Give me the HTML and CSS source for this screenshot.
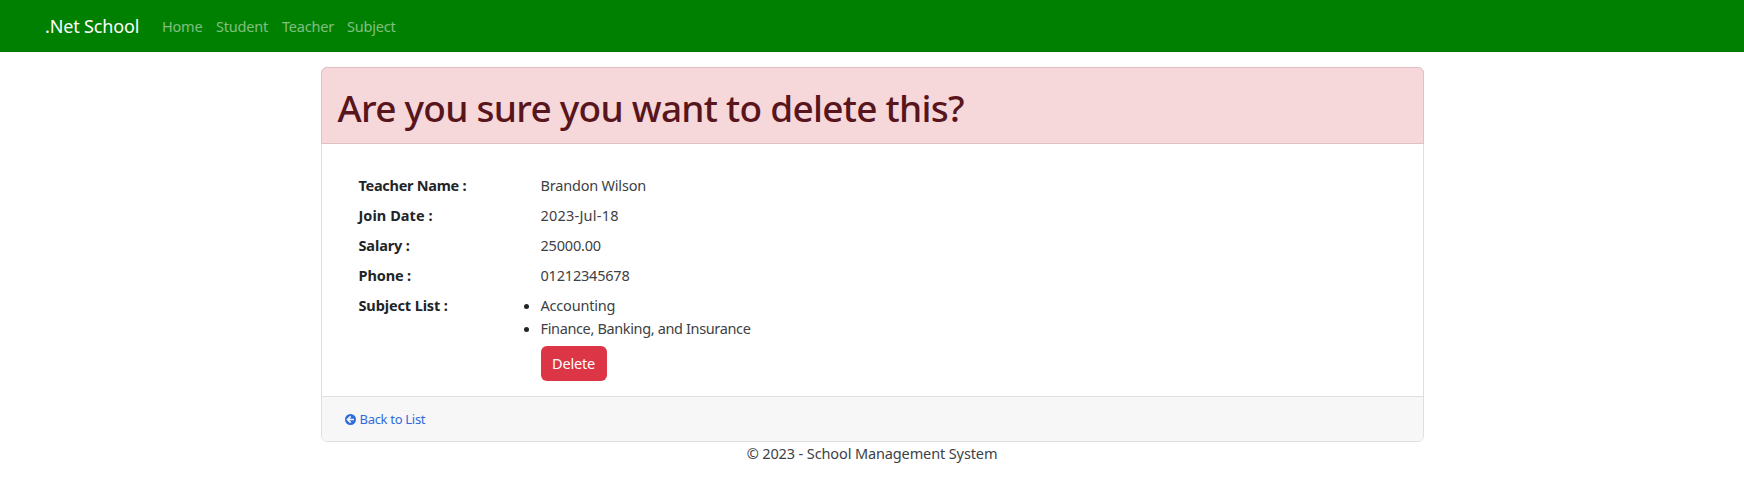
FILE: index.html
```html
<!DOCTYPE html>
<html lang="en">
<head>
  <meta charset="utf-8">
  <title>Delete - .Net School</title>
  <link rel="stylesheet" href="styles.css">
</head>
<body>
  <header class="navbar">
    <a class="brand" href="#">.Net School</a>
    <nav class="nav">
      <a class="nav-link home" href="#">Home</a>
      <a class="nav-link student" href="#">Student</a>
      <a class="nav-link teacher" href="#">Teacher</a>
      <a class="nav-link subject" href="#">Subject</a>
    </nav>
  </header>
  <main class="card">
    <div class="card-header"><h1 class="title">Are you sure you want to delete this?</h1></div>
    <div class="card-body">
      <dl class="details">
        <dt class="label-name">Teacher Name :</dt><dd>Brandon Wilson</dd>
        <dt class="label-date">Join Date :</dt><dd class="date">2023-Jul-18</dd>
        <dt>Salary :</dt><dd>25000.00</dd>
        <dt>Phone :</dt><dd>01212345678</dd>
        <dt>Subject List :</dt>
        <dd>
          <ul class="subjects">
            <li>Accounting</li>
            <li class="long">Finance, Banking, and Insurance</li>
          </ul>
        </dd>
      </dl>
      <button class="btn-delete" type="button">Delete</button>
    </div>
    <div class="card-footer">
      <a class="back" href="#">
        <svg class="back-icon" viewBox="0 0 24 24" aria-hidden="true">
          <circle cx="12" cy="12" r="12" fill="currentColor"/>
          <path d="M12.5 5 5.5 12l7 7M6.5 12H19.5" fill="none" stroke="#f7f7f7" stroke-width="3.6"/>
        </svg>
        <span>Back to List</span>
      </a>
    </div>
  </main>
  <footer class="footer"><span>© 2023 - School Management System</span></footer>
</body>
</html>
```
FILE: styles.css
```css
* { box-sizing: border-box; }

body {
  margin: 0;
  background: #fff;
  color: #212529;
  font: 14.5px/22.5px "Noto Sans", "Open Sans", sans-serif;
}

a { text-decoration: none; }

.navbar {
  display: flex;
  align-items: center;
  height: 52px;
  padding: 1px 45px 0;
  background: #008000;
  box-shadow: inset 0 -1px #007500;
}

.brand {
  width: 117px;
  color: #fff;
  font-size: 18px;
  letter-spacing: -0.15px;
}

.nav { display: flex; }

.nav-link { color: rgba(255, 255, 255, 0.5); white-space: nowrap; letter-spacing: -0.2px; }
.home { width: 54px; }
.student { width: 66px; }
.teacher { width: 65px; }

.card {
  width: 1103px;
  height: 375px;
  margin: 15px auto 0 320.5px;
  display: flex;
  flex-direction: column;
  border: 1px solid #dfdfdf;
  border-radius: 6px;
}

.card-header {
  height: 77px;
  margin: -1px -1px 0;
  padding: 0 16px;
  display: flex;
  align-items: center;
  background: #f6d7da;
  border: 1px solid #e2bfc3;
  border-radius: 6px 6px 0 0;
}

.title {
  margin: 3px 0 0;
  color: #58151c;
  font-size: 37px;
  line-height: 45px;
  font-weight: 500;
  letter-spacing: -0.74px;
  white-space: nowrap;
}

.card-body { flex: 1; padding: 30px 37px 0; }

.details {
  display: grid;
  grid-template-columns: 182px 1fr;
  row-gap: 7.5px;
  margin: 0;
}

.details dt { font-weight: 700; letter-spacing: -0.12px; }
.details dd { margin: 0; color: #3d4145; letter-spacing: -0.2px; }
.details .label-name { letter-spacing: -0.28px; }
.details .label-date { letter-spacing: 0.05px; }
.details .date { letter-spacing: 0.22px; }

.subjects { margin: 0; padding: 0; }
.subjects .long { letter-spacing: -0.36px; }
.subjects li::marker { color: #212529; }

.btn-delete {
  display: block;
  width: 66px;
  height: 35px;
  margin: 7px 0 0 182px;
  padding: 0;
  border: 0;
  border-radius: 6px;
  background: #dc3545;
  color: #fff;
  font: inherit;
  letter-spacing: -0.2px;
}

.card-footer {
  height: 45px;
  padding: 0 23px;
  display: flex;
  align-items: center;
  background: #f7f7f7;
  border-top: 1px solid #dfdfdf;
  border-radius: 0 0 5px 5px;
}

.back {
  display: flex;
  align-items: center;
  gap: 4px;
  color: #2f6bdc;
  font-size: 13px;
  letter-spacing: -0.3px;
}

.back-icon { width: 11px; height: 11px; }

.footer { text-align: center; color: #3d4145; letter-spacing: -0.12px; }
```
